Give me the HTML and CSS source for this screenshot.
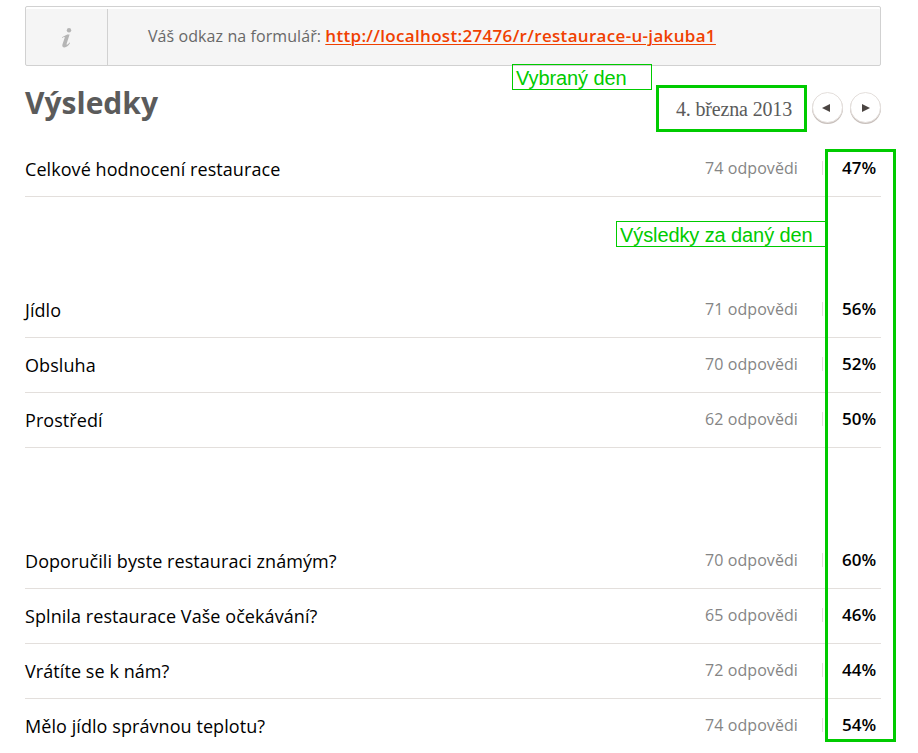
FILE: index.html
```html
<!DOCTYPE html>
<html lang="cs">
<head>
<meta charset="utf-8">
<title>Výsledky</title>
<link rel="stylesheet" href="styles.css">
</head>
<body>
<main class="page">
  <div class="info">
    <div class="info-icon">
      <svg width="11" height="20" viewBox="0 0 11 20"><circle cx="8" cy="2.3" r="2.2"/><path d="M1 9.2 L6.2 6.6 L8.6 6.4 L5.7 15.6 Q5.3 17 6.1 16.8 Q7.2 16.3 8.4 14.6 L9.1 15.1 Q6.5 19.4 3.4 19.4 Q.6 19.3 1.5 16.2 L3.7 9.7 Q4 8.7 2.8 9.1 L1.2 9.9 Z"/></svg>
    </div>
    <p class="info-text">Váš odkaz na formulář: <a class="link" href="#">http://localhost:27476/r/restaurace-u-jakuba1</a></p>
  </div>
  <header class="head">
    <h1 class="title">Výsledky</h1>
    <div class="date">4. března 2013</div>
    <button class="nav" aria-label="Předchozí den"><svg width="8" height="8" viewBox="0 0 8 8"><path d="M8 0V8L0 4Z"/></svg></button>
    <button class="nav next" aria-label="Další den"><svg width="8" height="8" viewBox="0 0 8 8"><path d="M0 0V8L8 4Z"/></svg></button>
    <span class="note note-day">Vybraný den</span>
  </header>
  <section class="results">
    <div class="group">
      <div class="row"><span class="label">Celkové hodnocení restaurace</span><span class="count">74 odpovědi</span><b class="score">47%</b></div>
    </div>
    <div class="group">
      <div class="row"><span class="label">Jídlo</span><span class="count">71 odpovědi</span><b class="score">56%</b></div>
      <div class="row"><span class="label">Obsluha</span><span class="count">70 odpovědi</span><b class="score">52%</b></div>
      <div class="row"><span class="label">Prostředí</span><span class="count">62 odpovědi</span><b class="score">50%</b></div>
    </div>
    <div class="group">
      <div class="row"><span class="label">Doporučili byste restauraci známým?</span><span class="count">70 odpovědi</span><b class="score">60%</b></div>
      <div class="row"><span class="label">Splnila restaurace Vaše očekávání?</span><span class="count">65 odpovědi</span><b class="score">46%</b></div>
      <div class="row"><span class="label">Vrátíte se k nám?</span><span class="count">72 odpovědi</span><b class="score">44%</b></div>
      <div class="row"><span class="label">Mělo jídlo správnou teplotu?</span><span class="count">74 odpovědi</span><b class="score">54%</b></div>
    </div>
    <span class="note note-results">Výsledky za daný den</span>
    <div class="frame"></div>
  </section>
</main>
</body>
</html>
```
FILE: styles.css
```css
* { box-sizing: border-box; }
html { overflow: hidden; }
body {
  margin: 0;
  height: 753px;
  overflow: hidden;
  background: #fff;
  color: #000;
  font-family: "Open Sans", sans-serif;
}
.page { width: 856px; margin: 6px 0 0 25px; }
.info {
  display: flex;
  height: 60px;
  border: 1px solid #d1d1d1;
  border-radius: 2px;
  background: #f5f5f5;
  box-shadow: inset 0 2px #fff;
}
.info-icon {
  width: 82px;
  margin-top: 2px;
  padding: 19px 0 0 35px;
  border-right: 1px solid #d1d1d1;
}
.info-icon svg { display: block; fill: #b5b5b5; }
.info-text {
  margin: 0 0 0 40px;
  font-size: 16px;
  line-height: 57px;
  letter-spacing: 0.08px;
  color: #686868;
  white-space: nowrap;
}
.link {
  color: #f04000;
  font-size: 17px;
  font-weight: 600;
  letter-spacing: 0.32px;
  text-underline-offset: 2px;
  text-decoration-thickness: 1px;
}
.head { position: relative; display: flex; height: 76px; }
.title { margin: 14px auto 0 0; font-size: 30px; line-height: 46px; color: #5b5b5b; }
.date {
  width: 151px;
  height: 47px;
  margin: 19px 5px 0 0;
  padding-right: 12px;
  border: 3px solid #00cb00;
  font: 20px/42px "Liberation Serif", serif;
  letter-spacing: -0.16px;
  color: #5b5b5b;
  text-align: right;
  white-space: nowrap;
}
.nav {
  display: flex;
  align-items: center;
  justify-content: center;
  width: 31px;
  height: 31px;
  margin-top: 26px;
  padding: 0 3px 0 0;
  border: 1px solid #e4dfdc;
  border-radius: 50%;
  background: #fff;
  box-shadow: 0 1px #c8c0bc;
}
.next { margin-left: 7px; padding: 0 0 0 1px; }
.nav svg { fill: #4b4542; }
.note {
  position: absolute;
  height: 26px;
  padding-left: 3px;
  border: 1px solid #00cb00;
  font: 20px/26px "Liberation Sans", sans-serif;
  letter-spacing: -0.1px;
  color: #00cb00;
  white-space: nowrap;
}
.note-day { left: 487px; top: -2px; width: 140px; }
.note-results { left: 591px; top: 79px; width: 211px; }
.results { position: relative; }
.group + .group { margin-top: 86px; }
.row {
  display: grid;
  grid-template-columns: 1fr auto 58px;
  height: 55px;
  border-bottom: 1px solid #e3dfdc;
  line-height: 54px;
  white-space: nowrap;
}
.label { font-size: 18px; letter-spacing: 0.07px; }
.count {
  width: 118px;
  height: 14px;
  margin-top: 19px;
  border-right: 1px solid #e3dfdc;
  line-height: 14px;
  font-size: 16px;
  letter-spacing: 0.08px;
  color: #858585;
}
.score { padding-left: 19px; font-size: 17px; line-height: 52px; font-weight: 600; }
.frame {
  position: absolute;
  left: 800px;
  top: 7px;
  width: 71px;
  height: 593px;
  border: 3px solid #00cb00;
}
```
